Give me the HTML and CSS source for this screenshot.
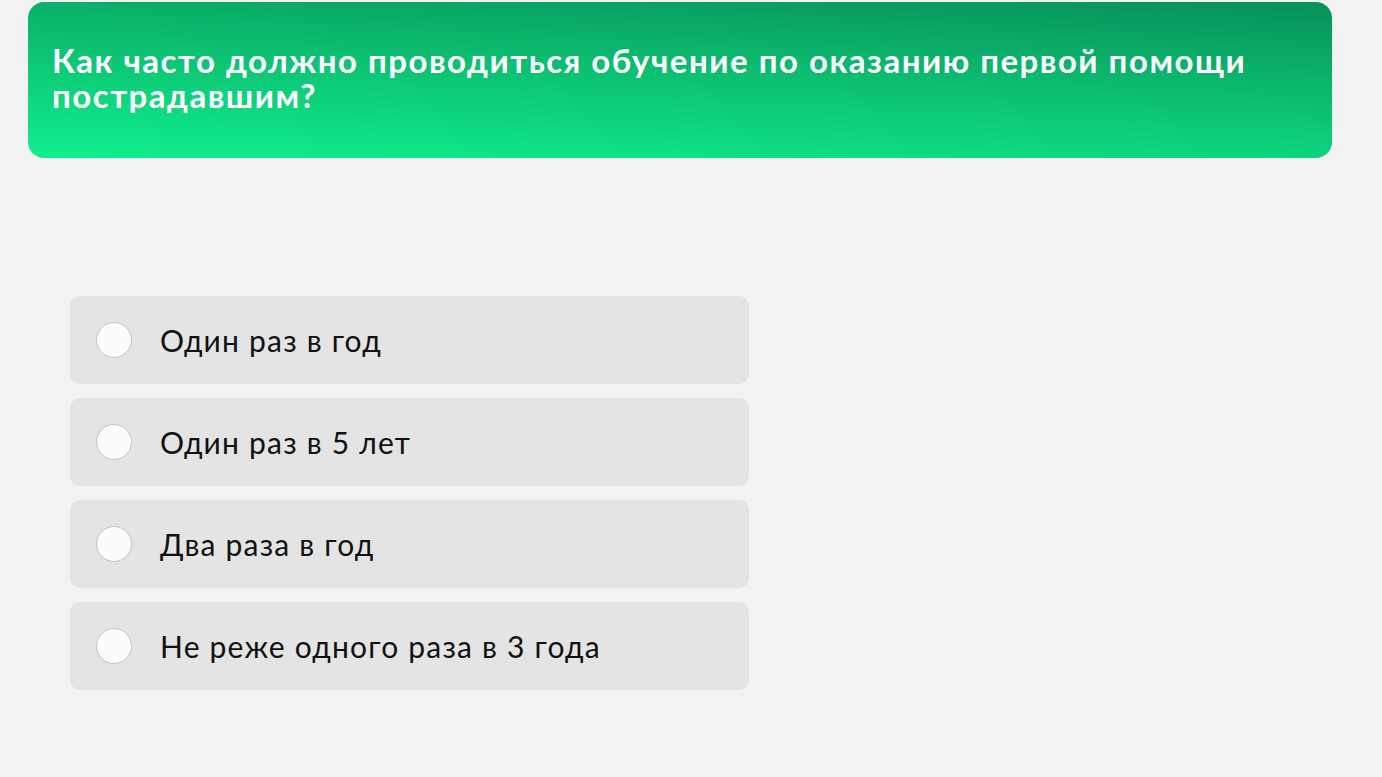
FILE: index.html
```html
<!DOCTYPE html>
<html lang="ru">
<head>
    <meta charset="utf-8">
    <title>Тест</title>
    <link rel="stylesheet" href="styles.css">
</head>
<body>
    <div class="question">
        <h1>Как часто должно проводиться обучение по оказанию первой помощи пострадавшим?</h1>
    </div>

    <div class="answers">
        <label class="answer">
            <input type="radio" name="answer">
            <span class="radio"></span>
            <span class="answer-text">Один раз в год</span>
        </label>
        <label class="answer">
            <input type="radio" name="answer">
            <span class="radio"></span>
            <span class="answer-text">Один раз в 5 лет</span>
        </label>
        <label class="answer">
            <input type="radio" name="answer">
            <span class="radio"></span>
            <span class="answer-text">Два раза в год</span>
        </label>
        <label class="answer">
            <input type="radio" name="answer">
            <span class="radio"></span>
            <span class="answer-text">Не реже одного раза в 3 года</span>
        </label>
    </div>
</body>
</html>
```

FILE: styles.css
```css
/* Базовые стили */
body {
    margin: 0;
    padding: 2px 50px 0 28px;
    background-color: #f2f2f2;
    font-family: "Lato", "Noto Sans", sans-serif;
    color: #111;
}

/* Блок с вопросом */
.question {
    background: linear-gradient(183deg, #07905a 0%, #0cc272 50%, #10ef8f 100%);
    border-radius: 16px;
    padding: 41px 24px 45px 24px;
}

.question h1 {
    margin: 0;
    color: #fff;
    font-size: 33px;
    line-height: 35px;
    font-weight: 700;
    letter-spacing: 1.5px;
}

/* Варианты ответа */
.answers {
    display: flex;
    flex-direction: column;
    gap: 14px;
    width: 679px;
    margin: 138px 0 0 42px;
}

.answer {
    display: flex;
    align-items: center;
    height: 88px;
    padding-left: 26px;
    background: #e4e4e4;
    border-radius: 10px;
    cursor: pointer;
}

.answer input {
    display: none;
}

.radio {
    width: 34px;
    height: 34px;
    border: 1px solid #c2c2c2;
    border-radius: 50%;
    background: #fcfcfc;
    flex-shrink: 0;
}

.answer input:checked + .radio {
    border: 10px solid #0bcb7a;
    width: 16px;
    height: 16px;
}

.answer-text {
    margin-left: 28px;
    font-size: 30px;
    letter-spacing: 1.2px;
}
```
